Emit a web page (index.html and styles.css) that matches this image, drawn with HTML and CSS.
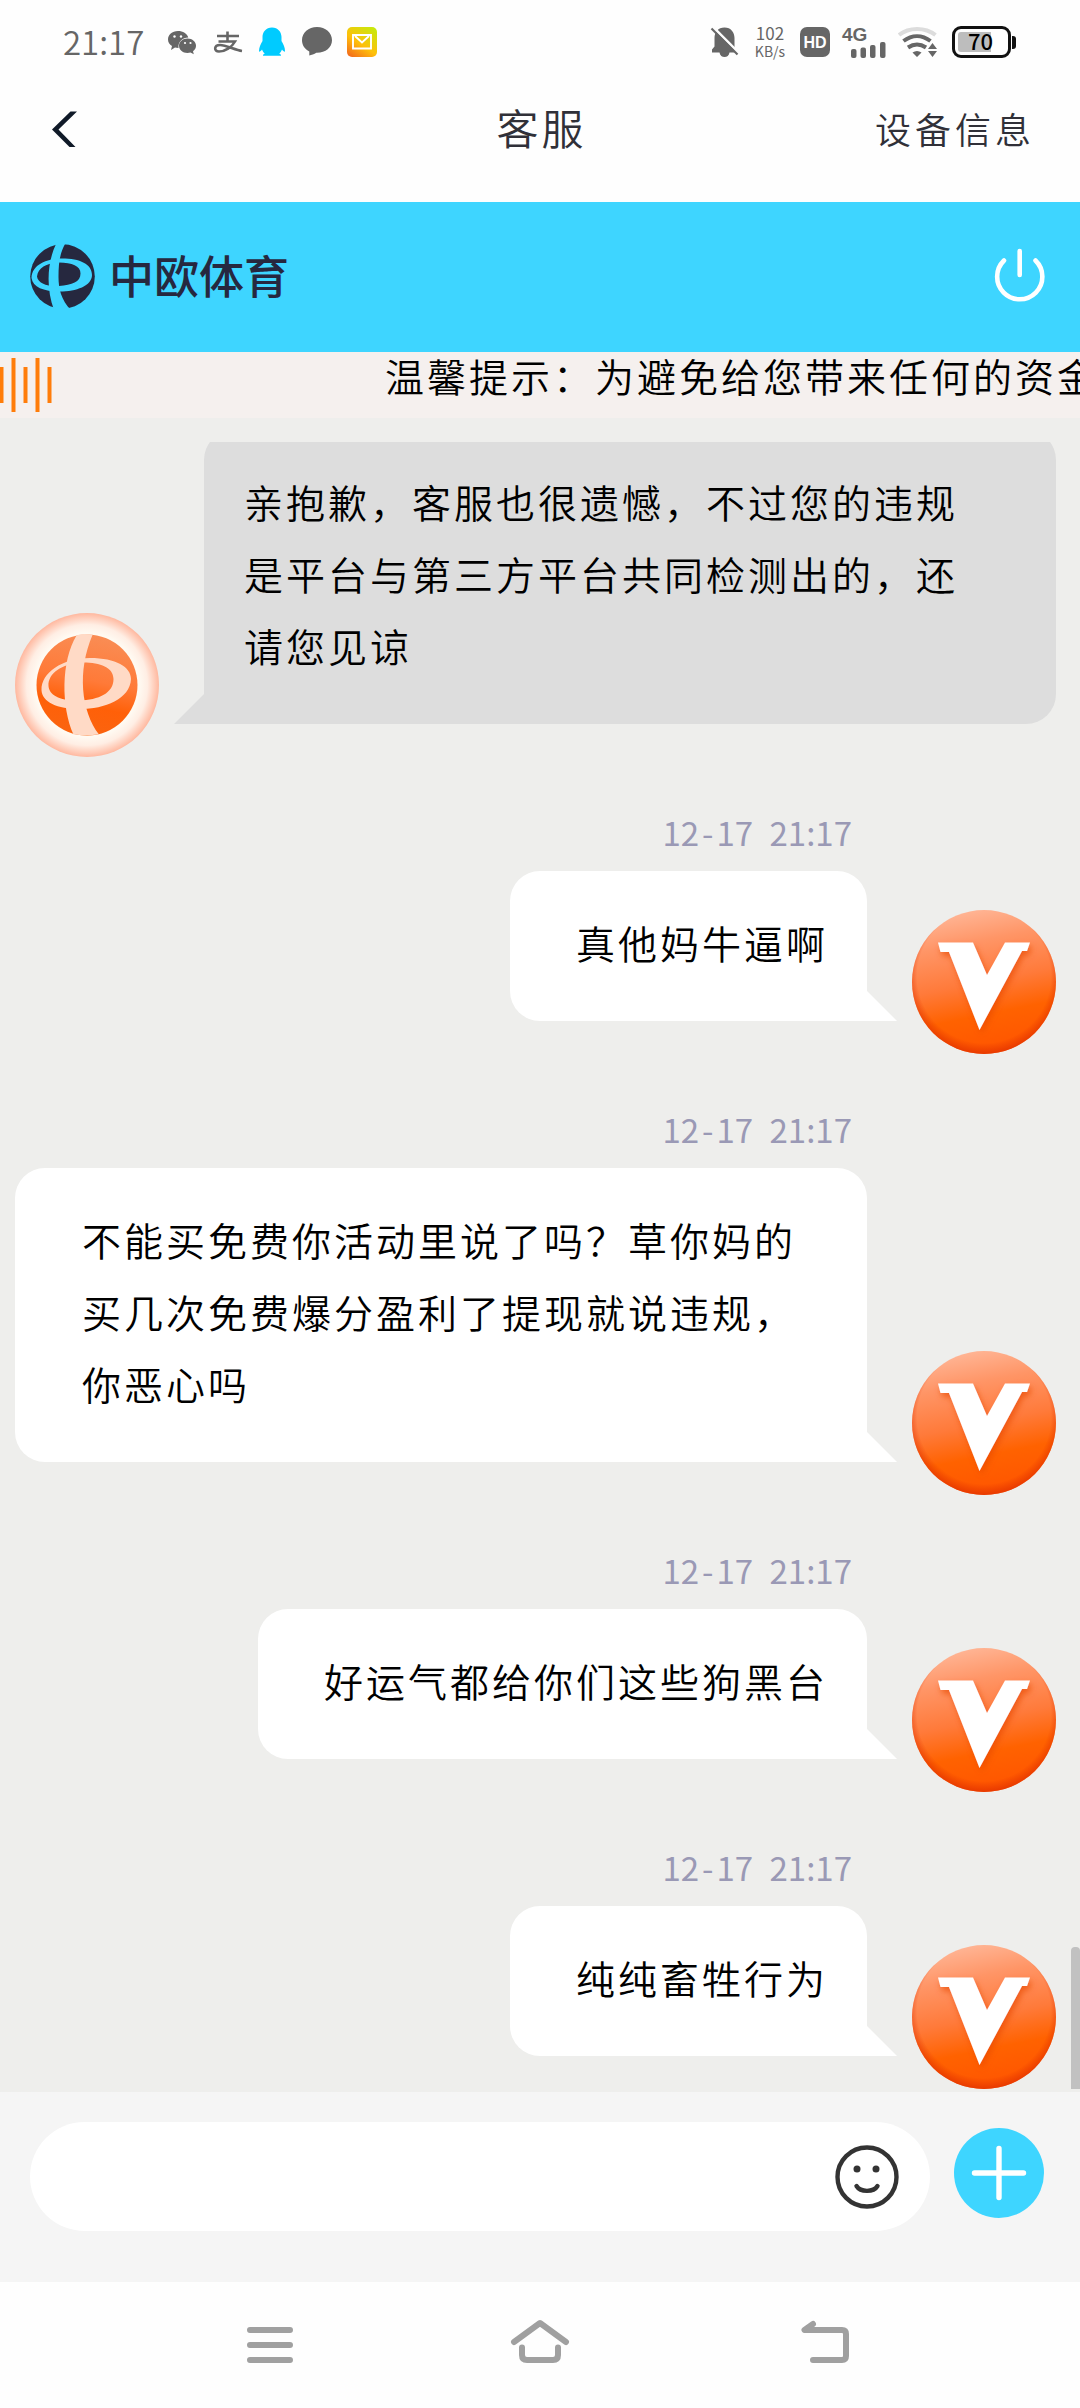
FILE: index.html
```html
<!DOCTYPE html>
<html lang="zh-CN">
<head>
<meta charset="utf-8">
<title>客服</title>
<link rel="stylesheet" href="styles.css">
</head>
<body>
<svg class="defs" width="0" height="0" aria-hidden="true">
  <defs>
    <linearGradient id="ball" x1="0.4" y1="0" x2="0.6" y2="1">
      <stop offset="0" stop-color="#ffb595"/>
      <stop offset="0.22" stop-color="#ff9566"/>
      <stop offset="0.5" stop-color="#ff7a3a"/>
      <stop offset="0.72" stop-color="#ff6200"/>
      <stop offset="1" stop-color="#ff5400"/>
    </linearGradient>
    <radialGradient id="rim" cx="0.5" cy="0.46" r="0.54">
      <stop offset="0.86" stop-color="#e03000" stop-opacity="0"/>
      <stop offset="1" stop-color="#e03000" stop-opacity="0.75"/>
    </radialGradient>
    <filter id="shade" x="-20%" y="-20%" width="150%" height="150%">
      <feDropShadow dx="2" dy="4" stdDeviation="3" flood-color="#e84a00" flood-opacity="0.7"/>
    </filter>
    <symbol id="vip" viewBox="0 0 144 144">
      <circle cx="72" cy="72" r="72" fill="url(#ball)"/>
      <circle cx="72" cy="72" r="72" fill="url(#rim)"/>
      <path d="M26 32.500H61L75 65L93 32.500H118L115 41H110L67.500 120L37 42H28.500Z" fill="#fff" filter="url(#shade)"/>
    </symbol>
  </defs>
</svg>

<header class="status">
  <div class="status-left">
    <span class="clock">21:17</span>
    <svg class="s-icons" width="210" height="32" viewBox="168 26 210 32">
      <g fill="#666">
        <path d="M178 31c-6 0-10 4-10 8.500 0 3 1.500 5 4 6.500l-1 4 4-2.500c1 .3 2 .4 3.500.4-.7-6 4-10.500 9.800-10.500C187 33.500 183 31 178 31z"/>
        <path d="M187.500 38.500c-5 0-8.500 3.300-8.500 7.300s3.500 7.200 8.500 7.200c1 0 2-.2 3-.5l3.300 1.700-.8-3c2-1.300 3-3.200 3-5.400 0-4-3.500-7.300-8.500-7.300z"/>
        <path d="M317 27c-8.500 0-15 5.800-15 13.300 0 5 3 9 7.300 11.200V55.500c2-.2 5-1.500 7-2.700 9 .3 15.700-5.300 15.700-12.500C332 32.800 325.500 27 317 27z"/>
      </g>
      <g fill="#fff"><circle cx="174.500" cy="36.500" r="1.200"/><circle cx="181" cy="36.500" r="1.200"/><circle cx="185" cy="43" r="1.100"/><circle cx="190.500" cy="43" r="1.100"/></g>
      <path d="M217 36H239M227.500 31.500V41M218.500 41.500H235C232 47 225 51.500 219 51.500C213.500 51.500 214 45 220 45C226 45 235 50 242 51" fill="none" stroke="#666" stroke-width="2.600"/>
      <path d="M272 27.500c-6 0-9.500 4.500-9.500 9.500v4c-2 3-3.500 7-3.500 10 0 1.500 1.500.5 3-1.500.5 1.500 1.500 3 2.800 4-1.500.6-1.800 1-1.800 2.300H281c0-1.300-.3-1.700-1.800-2.300 1.300-1 2.300-2.500 2.800-4 1.500 2 3 3 3 1.500 0-3-1.500-7-3.500-10v-4c0-5-3.500-9.500-9.500-9.500z" fill="#00cbff"/>
      <linearGradient id="mail" x1="0.1" y1="1" x2="0.8" y2="0"><stop offset="0" stop-color="#f26a1c"/><stop offset="0.45" stop-color="#ffbf0a"/><stop offset="1" stop-color="#c9e80c"/></linearGradient>
      <rect x="347" y="27" width="30" height="30" rx="5" fill="url(#mail)"/>
      <path d="M353 35H371V48.500H353ZM355 36L362 42.500L369 36" fill="none" stroke="#fff" stroke-width="1.900"/>
    </svg>
  </div>
  <div class="status-right">
    <svg width="29" height="32" viewBox="710 26 29 32">
      <path d="M724.500 27.500c-6.500 0-10 5-10 10.500V46.500l-2.500 3v3H719.500c.5 3 2.500 4.500 5 4.500s4.500-1.500 5-4.500h5L734.500 48V38c0-5.500-3.500-10.500-10-10.500z" fill="#666"/>
      <path d="M713 27L739 53" stroke="#fdfdfd" stroke-width="2.500"/>
      <path d="M711.500 28.500L737.500 54.500" stroke="#666" stroke-width="2.200"/>
    </svg>
    <div class="speed"><span>102</span><span class="unit">KB/s</span></div>
    <div class="hd">HD</div>
    <div class="cell">
      <span class="net">4G</span>
      <svg width="36" height="17" viewBox="851 40 36 17" fill="#666"><rect x="852" y="48" width="5.500" height="9" rx="2"/><rect x="861.500" y="46.500" width="5.500" height="10.500" rx="2"/><rect x="871" y="44" width="5.500" height="13" rx="2"/><rect x="881" y="41" width="5.500" height="16" rx="2"/></svg>
    </div>
    <svg class="wifi" width="40" height="32" viewBox="899 26 40 32" fill="none" stroke="#666" stroke-width="4">
      <path d="M900 35C910 27 926 27 936.500 35" stroke="#dcdcdc"/>
      <path d="M904.500 41C913 34.500 923 34.500 931.500 41"/>
      <path d="M909 47.500C915 43.500 921 43.500 927 47.500"/>
      <path d="M918 57L913.500 52.500Q918 49.500 922.500 52.500ZM933.500 43L938 49H929ZM933.500 57L938 51H929Z" fill="#666" stroke="none"/>
    </svg>
    <div class="battery"><span class="level"></span><span class="pct">70</span></div>
  </div>
</header>

<div class="titlebar">
  <svg class="back" width="27" height="38" viewBox="51 111 27 38"><path d="M52 129.500L70.500 111.500H77L58.500 129.500L75.500 147H69.500Z" fill="#101a28"/></svg>
  <h1>客服</h1>
  <span class="device">设备信息</span>
</div>

<div class="brand">
  <svg width="66" height="66" viewBox="0 0 66 66">
    <circle cx="32.500" cy="32.500" r="32.300" fill="#26283f"/>
    <g fill="#3ed5ff">
      <path fill-rule="evenodd" d="M1.500 34C2 21 16 14.500 32 14.500C50 14.500 62 20 62 31C62 42 46 47.500 30 47.500C13 47.500 3 43 1.500 34ZM7 32.500C8 39 16 42.500 29 42C42 41 50.500 38 50.500 29.500C50.500 22 42 18.500 29 18.500C16 19 8 24 7 32.500Z"/>
      <path d="M26 0C17 19 16 44 24 66H41C31 56 28.500 44 28.500 33C28.500 20 29.500 10 35 0Z"/>
    </g>
  </svg>
  <span class="brand-name">中欧体育</span>
  <svg class="power" width="54" height="60" viewBox="993 248 54 60" fill="none" stroke="#fff" stroke-width="4.600" stroke-linecap="round"><path d="M1004 261.500A22.600 22.600 0 1 0 1035.500 261.500M1019.700 252V276"/></svg>
</div>

<div class="notice">
  <svg width="54" height="66" viewBox="0 352 54 66" fill="#ff7d0a"><rect x="0" y="367" width="3.500" height="36"/><rect x="11.500" y="358" width="4" height="54"/><rect x="23.500" y="367" width="4" height="36"/><rect x="35.500" y="358" width="4" height="54"/><rect x="47.500" y="367" width="4" height="36"/></svg>
  <div class="marquee">温馨提示：为避免给您带来任何的资金</div>
</div>

<main class="chat">
  <div class="scroll">
    <article class="msg agent">
      <div class="row">
        <svg class="avatar" viewBox="0 0 144 144">
          <defs>
            <radialGradient id="halo" cx="0.5" cy="0.5" r="0.5">
              <stop offset="0.72" stop-color="#fffaf2"/>
              <stop offset="0.84" stop-color="#ffeee4"/>
              <stop offset="1" stop-color="#ffb89f"/>
            </radialGradient>
            <linearGradient id="core" x1="0.6" y1="0" x2="0.4" y2="1">
              <stop offset="0" stop-color="#f98d55"/>
              <stop offset="0.45" stop-color="#ff7a38"/>
              <stop offset="0.7" stop-color="#ff6008"/>
              <stop offset="1" stop-color="#fa6410"/>
            </linearGradient>
          </defs>
          <circle cx="72" cy="72" r="72" fill="url(#halo)"/>
          <circle cx="72" cy="72" r="50.500" fill="url(#core)"/>
          <g fill="#ffdac6">
            <path fill-rule="evenodd" d="M26.500 77C26 60 47 45 75 45C101 45 116 54 116 66C115 86 90 96 65 96C42 96 27 89 26.500 77ZM33.500 73C34 82 45 88 64 87.500C84 87 98.500 80 98.500 66C98.500 54 84 49 66 49.500C47 51 33 60 33.500 73Z"/>
            <path d="M61.500 22.500C46 48 46 94 58.500 121.500Q70 123 84 121.500C66 98 62 58 77.500 22Q68 20 61.500 22.500Z"/>
          </g>
        </svg>
        <p class="bubble">亲抱歉，客服也很遗憾，不过您的违规是平台与第三方平台共同检测出的，还请您见谅</p>
      </div>
    </article>

    <article class="msg user">
      <time>12<i>-</i>17 21:17</time>
      <div class="row">
        <p class="bubble">真他妈牛逼啊</p>
        <svg class="avatar"><use href="#vip"/></svg>
      </div>
    </article>

    <article class="msg user">
      <time>12<i>-</i>17 21:17</time>
      <div class="row">
        <p class="bubble long">不能买免费你活动里说了吗？草你妈的<br>买几次免费爆分盈利了提现就说违规，<br>你恶心吗</p>
        <svg class="avatar"><use href="#vip"/></svg>
      </div>
    </article>

    <article class="msg user">
      <time>12<i>-</i>17 21:17</time>
      <div class="row">
        <p class="bubble">好运气都给你们这些狗黑台</p>
        <svg class="avatar"><use href="#vip"/></svg>
      </div>
    </article>

    <article class="msg user">
      <time>12<i>-</i>17 21:17</time>
      <div class="row">
        <p class="bubble">纯纯畜牲行为</p>
        <svg class="avatar"><use href="#vip"/></svg>
      </div>
    </article>
  </div>
  <span class="thumb"></span>
</main>

<footer class="composer">
  <div class="input">
    <svg width="64" height="64" viewBox="0 0 64 64" fill="none" stroke="#333" stroke-width="4.400" stroke-linecap="round"><circle cx="32" cy="32" r="29.500"/><path d="M21.500 41C25.500 47.500 38.500 47.500 42.500 41"/><circle cx="22" cy="24" r="3.500" fill="#333" stroke="none"/><circle cx="41" cy="24" r="3.500" fill="#333" stroke="none"/></svg>
  </div>
  <svg class="add" width="90" height="90" viewBox="0 0 90 90"><circle cx="45" cy="45" r="45" fill="#3ed5ff"/><path d="M45 20.500V69.500M20.500 45H69.500" stroke="#fff" stroke-width="5.400" stroke-linecap="round"/></svg>
</footer>

<nav class="sysnav">
  <svg width="60" height="50" viewBox="240 2318 60 50"><path d="M250 2330H290M250 2345H290M250 2360H290"/></svg>
  <svg width="60" height="50" viewBox="510 2318 60 50"><path d="M514 2342L540 2323L566 2342M522 2347.500V2355Q522 2360 527 2360H553Q558 2360 558 2355V2347.500" /></svg>
  <svg width="60" height="50" viewBox="780 2318 60 50" class="nav-back"><path d="M813 2324L804.500 2330H842Q846 2330 846 2334V2356Q846 2360 842 2360H813"/></svg>
</nav>
</body>
</html>
```
FILE: styles.css
```css
* {
  box-sizing: border-box;
}

body {
  margin: 0;
  width: 1080px;
  height: 2408px;
  display: flex;
  flex-direction: column;
  overflow: hidden;
  background: #fefefe;
  color: #000;
  font-family: "Noto Sans CJK SC", "Noto Sans", sans-serif;
  font-size: 39px;
  font-weight: 350;
}

svg {
  display: block;
  flex: none;
}

.defs {
  position: absolute;
}

/* status bar */
.status {
  height: 84px;
  padding: 0 63px;
  display: flex;
  justify-content: space-between;
  align-items: center;
  color: #666;
}

.status-left,
.status-right {
  display: flex;
  align-items: center;
}

.clock {
  width: 105px;
  margin-bottom: 3px;
  font-size: 33px;
  line-height: 40px;
}

.speed {
  margin-left: 16px;
  width: 30px;
  display: flex;
  flex-direction: column;
  align-items: center;
  font-size: 17px;
  font-weight: 400;
  line-height: 19px;
}

.speed .unit {
  font-size: 14px;
}

.hd {
  margin-left: 15px;
  width: 30px;
  height: 30px;
  border-radius: 7px;
  background: #666;
  color: #fff;
  font: 700 16px/31px "Liberation Sans", sans-serif;
  text-align: center;
}

.cell {
  margin-left: 12px;
  width: 44px;
  height: 30px;
  display: flex;
  flex-direction: column;
}

.cell .net {
  height: 14px;
  font: 700 19px/15px "Liberation Sans", sans-serif;
}

.cell svg {
  margin-left: 8px;
}

.wifi {
  margin-left: 12px;
}

.battery {
  position: relative;
  margin-left: 14px;
  width: 59px;
  height: 32px;
  border: 3px solid #111;
  border-radius: 9px;
  padding: 3px;
}

.battery::after {
  content: "";
  position: absolute;
  left: 57px;
  top: 7px;
  width: 4px;
  height: 13px;
  border-radius: 0 3px 3px 0;
  background: #111;
}

.level {
  display: block;
  width: 33px;
  height: 20px;
  border-radius: 3px 0 0 3px;
  background: #bdbdbd;
}

.pct {
  position: absolute;
  left: 0;
  top: 0;
  width: 51px;
  color: #000;
  font-size: 22px;
  font-weight: 500;
  line-height: 23px;
  text-align: center;
}

.status-right {
  margin-right: 6px;
}

/* title bar */
.titlebar {
  height: 118px;
  padding: 0 45px 26px 51px;
  display: grid;
  grid-template-columns: 1fr auto 1fr;
  align-items: center;
  color: #303038;
}

.titlebar h1 {
  margin: 0 3px 6px 0;
  font-size: 42px;
  font-weight: 350;
  line-height: 60px;
  letter-spacing: 3px;
}

.device {
  justify-self: end;
  margin-bottom: 5px;
  font-size: 36px;
  letter-spacing: 4px;
}

/* brand strip */
.brand {
  height: 150px;
  padding: 0 33px 0 30px;
  display: flex;
  align-items: center;
  background: #3ed5ff;
}

.brand-name {
  margin: 0 0 4px 13px;
  color: #26283f;
  font-size: 45px;
  font-weight: 500;
  line-height: 60px;
}

.power {
  margin-left: auto;
}

/* notice */
.notice {
  height: 66px;
  display: flex;
  background: #f5f0ee;
}

.marquee {
  flex: 1;
  padding-left: 331px;
  overflow: hidden;
  white-space: nowrap;
  letter-spacing: 3px;
  line-height: 46px;
}

/* chat */
.chat {
  position: relative;
  height: 1674px;
  padding: 24px 24px 3px 15px;
  background: #eeeeec;
}

.scroll {
  height: 100%;
  display: flex;
  flex-direction: column;
  justify-content: flex-end;
  overflow: hidden;
}

.thumb {
  position: absolute;
  right: 0;
  bottom: 3px;
  width: 9px;
  height: 142px;
  border-radius: 4px 4px 0 0;
  background: #c1c1c1;
}

.msg {
  flex: none;
}

.msg.user {
  padding-top: 51px;
}

.msg time {
  display: block;
  margin: 0 204px 15px 0;
  color: #9a99b5;
  font-size: 33px;
  font-weight: 400;
  line-height: 48px;
  text-align: right;
  word-spacing: 9px;
}

.msg i {
  padding: 0 3px;
  font-style: normal;
}

.row {
  display: flex;
  align-items: flex-end;
  gap: 45px;
}

.user .row {
  justify-content: flex-end;
}

.avatar {
  width: 144px;
  height: 144px;
}

.bubble {
  position: relative;
  max-width: 852px;
  margin: 0 0 33px;
  border-radius: 30px;
  line-height: 72px;
  letter-spacing: 3px;
}

.bubble::after {
  content: "";
  position: absolute;
  bottom: 0;
  width: 30px;
  height: 30px;
  background: inherit;
}

.user .bubble {
  padding: 35px 39px 43px 66px;
  border-bottom-right-radius: 0;
  background: #fff;
}

.user .bubble::after {
  left: 100%;
  clip-path: polygon(0 0, 100% 100%, 0 100%);
}

.user .bubble.long {
  width: 852px;
  padding-left: 67px;
}

.agent .bubble {
  width: 852px;
  padding: 35px 66px 43px 40px;
  border-bottom-left-radius: 0;
  background: #ddd;
}

.agent .bubble::after {
  right: 100%;
  clip-path: polygon(100% 0, 100% 100%, 0 100%);
}

/* composer */
.composer {
  height: 190px;
  padding: 30px 36px 0 30px;
  display: flex;
  align-items: flex-start;
  justify-content: space-between;
  background: #f5f5f5;
}

.input {
  width: 900px;
  height: 109px;
  padding-right: 31px;
  display: flex;
  align-items: center;
  justify-content: flex-end;
  border-radius: 55px;
  background: #fff;
}

.add {
  margin-top: 6px;
}

/* system navigation */
.sysnav {
  flex: 1;
  display: flex;
  align-items: center;
  justify-content: center;
  gap: 210px;
}

.sysnav svg {
  margin-bottom: 4px;
  overflow: visible;
  fill: none;
  stroke: #a0a0a0;
  stroke-width: 6;
  stroke-linecap: round;
  stroke-linejoin: round;
}
```
